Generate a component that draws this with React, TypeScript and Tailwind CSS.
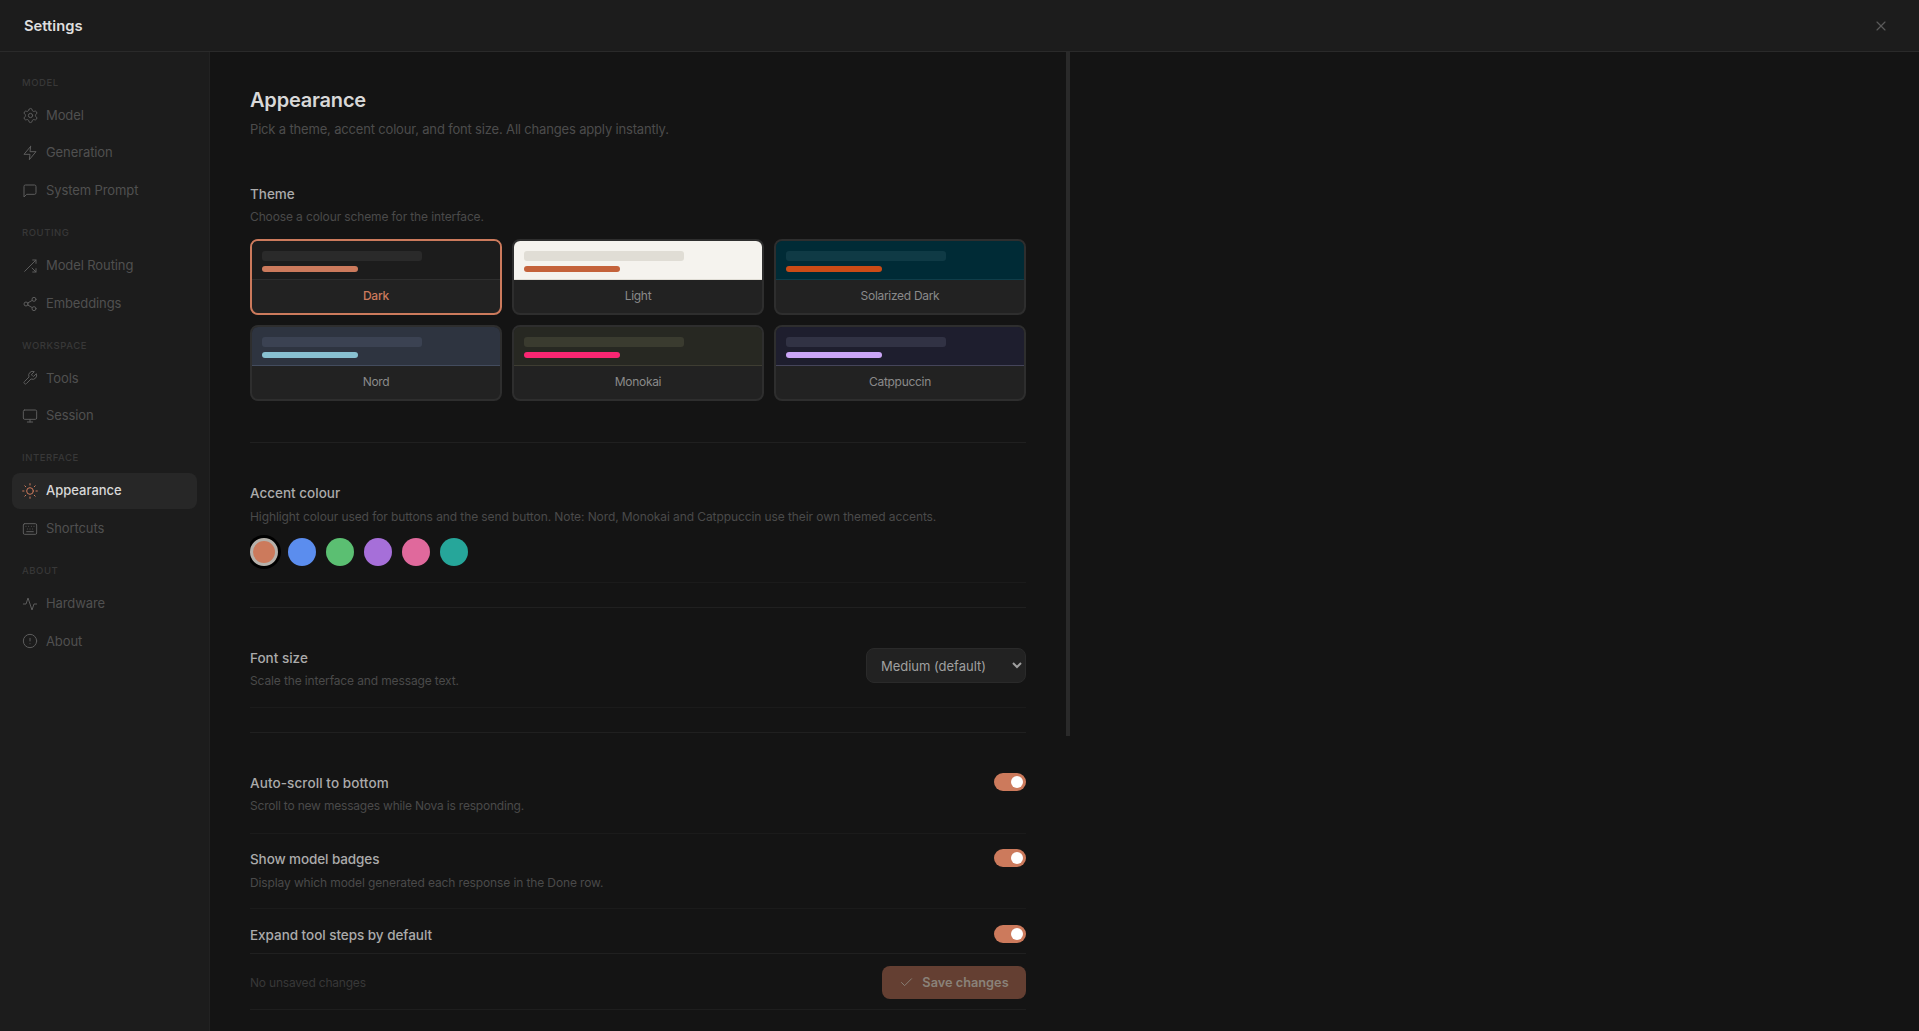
import { Settings, Keyboard, X, Check } from "lucide-react";
import type { ReactNode } from "react";

function Svg({ className, children }: { className?: string; children: ReactNode }) {
  return (
    <svg width="16" height="16" viewBox="0 0 24 24" fill="none" stroke="currentColor" strokeWidth="1.5" strokeLinecap="round" strokeLinejoin="round" className={className}>
      {children}
    </svg>
  );
}

const Gear = ({ className }: { className?: string }) => <Settings size={17} strokeWidth={1.4} className={`-mx-[0.5px] ${className}`} />;
const Keys = ({ className }: { className?: string }) => <Keyboard size={16} strokeWidth={1.5} className={className} />;
const Bolt = ({ className }: { className?: string }) => (
  <Svg className={className}><polygon points="13 2 3 14 12 14 11 22 21 10 12 10 13 2" /></Svg>
);
const Chat = ({ className }: { className?: string }) => (
  <Svg className={className}><path d="M21 15a2 2 0 0 1-2 2H7l-4 4V5a2 2 0 0 1 2-2h14a2 2 0 0 1 2 2z" /></Svg>
);
const RouteIcon = ({ className }: { className?: string }) => (
  <Svg className={className}>
    <polyline points="16 3 21 3 21 8" />
    <line x1="4" y1="20" x2="21" y2="3" />
    <polyline points="21 16 21 21 16 21" />
    <line x1="15" y1="15" x2="21" y2="21" />
  </Svg>
);
const ShareIcon = ({ className }: { className?: string }) => (
  <Svg className={className}>
    <circle cx="18" cy="5" r="3" />
    <circle cx="6" cy="12" r="3" />
    <circle cx="18" cy="19" r="3" />
    <line x1="8.59" y1="13.51" x2="15.42" y2="17.49" />
    <line x1="15.41" y1="6.51" x2="8.59" y2="10.49" />
  </Svg>
);
const WrenchIcon = ({ className }: { className?: string }) => (
  <Svg className={className}>
    <path d="M14.7 6.3a1 1 0 0 0 0 1.4l1.6 1.6a1 1 0 0 0 1.4 0l3.77-3.77a6 6 0 0 1-7.94 7.94l-6.91 6.91a2.12 2.12 0 0 1-3-3l6.91-6.91a6 6 0 0 1 7.94-7.94l-3.76 3.76z" />
  </Svg>
);
const MonitorIcon = ({ className }: { className?: string }) => (
  <Svg className={className}>
    <rect x="2" y="3" width="20" height="14" rx="2" ry="2" />
    <line x1="8" y1="21" x2="16" y2="21" />
    <line x1="12" y1="17" x2="12" y2="21" />
  </Svg>
);
const SunIcon = ({ className }: { className?: string }) => (
  <Svg className={className}>
    <circle cx="12" cy="12" r="5" />
    <line x1="12" y1="1" x2="12" y2="3" />
    <line x1="12" y1="21" x2="12" y2="23" />
    <line x1="4.22" y1="4.22" x2="5.64" y2="5.64" />
    <line x1="18.36" y1="18.36" x2="19.78" y2="19.78" />
    <line x1="1" y1="12" x2="3" y2="12" />
    <line x1="21" y1="12" x2="23" y2="12" />
    <line x1="4.22" y1="19.78" x2="5.64" y2="18.36" />
    <line x1="18.36" y1="5.64" x2="19.78" y2="4.22" />
  </Svg>
);
const PulseIcon = ({ className }: { className?: string }) => (
  <Svg className={className}><polyline points="22 12 18 12 15 21 9 3 6 12 2 12" /></Svg>
);
const AlertIcon = ({ className }: { className?: string }) => (
  <Svg className={className}>
    <circle cx="12" cy="12" r="10" />
    <line x1="12" y1="8" x2="12" y2="12" />
    <line x1="12" y1="16" x2="12.01" y2="16" />
  </Svg>
);

const nav = [
  { label: "Model", items: [
    { name: "Model", Icon: Gear },
    { name: "Generation", Icon: Bolt },
    { name: "System Prompt", Icon: Chat },
  ]},
  { label: "Routing", items: [
    { name: "Model Routing", Icon: RouteIcon },
    { name: "Embeddings", Icon: ShareIcon },
  ]},
  { label: "Workspace", items: [
    { name: "Tools", Icon: WrenchIcon },
    { name: "Session", Icon: MonitorIcon },
  ]},
  { label: "Interface", items: [
    { name: "Appearance", Icon: SunIcon, active: true },
    { name: "Shortcuts", Icon: Keys },
  ]},
  { label: "About", items: [
    { name: "Hardware", Icon: PulseIcon },
    { name: "About", Icon: AlertIcon },
  ]},
];

const themes = [
  { name: "Dark", preview: "bg-[#1c1c1c] border-[#2e2e2e]", bar: "bg-[#2a2a2a]", accent: "bg-[#cc7a5c]", active: true },
  { name: "Light", preview: "bg-[#f5f3ee] border-[#e0ddd5]", bar: "bg-[#e0ddd5]", accent: "bg-[#c4623a]" },
  { name: "Solarized Dark", preview: "bg-[#002b36] border-[#0f3d49]", bar: "bg-[#0f3a45]", accent: "bg-[#cb4b16]" },
  { name: "Nord", preview: "bg-[#2e3440] border-[#434c5e]", bar: "bg-[#3b4252]", accent: "bg-[#88c0d0]" },
  { name: "Monokai", preview: "bg-[#272822] border-[#3e3d32]", bar: "bg-[#3a3b2f]", accent: "bg-[#f92672]" },
  { name: "Catppuccin", preview: "bg-[#1e1e2e] border-[#45455a]", bar: "bg-[#313244]", accent: "bg-[#cba6f7]" },
];

const swatches = ["bg-[#5b8dee]", "bg-[#5bbf72]", "bg-[#a66fd9]", "bg-[#e0699c]", "bg-[#26a69a]"];

function Toggle() {
  return (
    <div className="flex h-[18px] w-8 shrink-0 items-center justify-end rounded-full bg-[#cc7a5c] pr-[3px]">
      <div className="h-3 w-3 rounded-full bg-white" />
    </div>
  );
}

export default function App() {
  return (
    <div className="flex h-screen flex-col overflow-hidden bg-[#141414] font-['Inter',sans-serif] text-[#ababab]">
      <header className="flex h-[52px] shrink-0 items-center justify-between border-b border-[#2a2a2a] bg-[#1c1c1c] pl-6 pr-[30px] pt-px">
        <h2 className="text-[14.75px] font-semibold text-[#dedede]">Settings</h2>
        <X size={16} strokeWidth={1.75} className="text-[#5a5a5a]" />
      </header>
      <div className="flex min-h-0 flex-1">
        <aside className="flex w-[210px] shrink-0 flex-col border-r border-[#222222] bg-[#1c1c1c] px-3 pt-[23px]">
          {nav.map((section, i) => (
            <div key={section.label} className={i ? "mt-4" : ""}>
              <div className="mb-[6px] flex h-4 items-center pl-2.5 text-[9.5px] font-medium uppercase tracking-[0.06em] text-[#383838]">
                {section.label}
              </div>
              <div className="flex flex-col gap-px">
                {section.items.map(({ name, Icon, active }: any) => (
                  <div
                    key={name}
                    className={
                      active
                        ? "flex h-[36.8px] items-center gap-2 rounded-lg bg-[#272727] pl-2.5 text-[13px] font-medium text-[#d8d8d8]"
                        : "flex h-[36.8px] items-center gap-2 rounded-lg pl-2.5 text-[13px] tracking-[-0.1px] text-[#505050]"
                    }
                  >
                    <Icon className={active ? "text-[#cc7a5c]" : "text-[#5c5c5c]"} />
                    <span>{name}</span>
                  </div>
                ))}
              </div>
            </div>
          ))}
        </aside>
        <main className="flex w-[860px] shrink-0">
          <div className="flex min-w-0 flex-1 flex-col px-10">
            <div className="min-h-0 flex-1 overflow-hidden pt-[34px]">
              <h1 className="h-7 text-[20px] font-semibold leading-7 tracking-[-0.2px] text-[#d8d8d8]">Appearance</h1>
              <p className="mt-[5px] h-5 text-[13px] leading-5 tracking-[-0.17px] text-[#4c4c4c]">
                Pick a theme, accent colour, and font size. All changes apply instantly.
              </p>

              <div className="mt-[45px] h-5 text-[13.5px] font-medium leading-5">Theme</div>
              <div className="mt-1 h-[18px] text-[12px] leading-[18px] tracking-[-0.12px] text-[#4a4a4a]">Choose a colour scheme for the interface.</div>
              <div className="mt-[13px] grid grid-cols-3 gap-2.5">
                {themes.map((t) => (
                  <div
                    key={t.name}
                    className={
                      t.active
                        ? "h-[76px] overflow-hidden rounded-lg border-2 border-[#cc7a5c] bg-[#222222]"
                        : "h-[76px] overflow-hidden rounded-lg border-2 border-[#2e2e2e] bg-[#222222]"
                    }
                  >
                    <div className={`h-[39px] border-b px-2.5 pt-2.5 ${t.preview}`}>
                      <div className={`h-2.5 w-[70%] rounded-[3px] ${t.bar}`} />
                      <div className={`mt-[5px] h-1.5 w-[42%] rounded-[3px] ${t.accent}`} />
                    </div>
                    <div className={t.active ? "flex h-[31px] items-center justify-center text-[12px] font-medium tracking-[-0.2px] text-[#cc7a5c]" : "flex h-[31px] items-center justify-center text-[12px] tracking-[-0.3px] text-[#8a8a8a]"}>
                      {t.name}
                    </div>
                  </div>
                ))}
              </div>

              <div className="mt-[41px] border-t border-[#202020]" />

              <div className="mt-10 h-5 text-[13.5px] font-medium leading-5">Accent colour</div>
              <div className="mt-[5px] h-[18px] text-[12px] leading-[18px] tracking-[-0.09px] text-[#4a4a4a]">
                Highlight colour used for buttons and the send button. Note: Nord, Monokai and Catppuccin use their own themed accents.
              </div>
              <div className="mt-[12px] flex gap-2.5">
                <div className="h-7 w-7 rounded-full border-[3px] border-[#b5b1ab] bg-[#cc7a5c] shadow-[0_0_0_3px_#000000]" />
                {swatches.map((c) => (
                  <div key={c} className={`h-7 w-7 rounded-full ${c}`} />
                ))}
              </div>

              <div className="mt-4 border-t border-[#1b1b1b]" />
              <div className="mt-6 border-t border-[#202020]" />

              <div className="mt-10 flex items-start justify-between">
                <div>
                  <div className="h-5 text-[13.5px] font-medium leading-5">Font size</div>
                  <div className="mt-1 h-[18px] text-[12px] leading-[18px] tracking-[-0.13px] text-[#4a4a4a]">Scale the interface and message text.</div>
                </div>
                <select className="h-[35px] w-40 rounded-lg border border-[#2a2a2a] bg-[#222222] pl-[10px] text-[13px] tracking-[-0.02px] text-[#a0a0a0] outline-none [color-scheme:dark]" defaultValue="Medium (default)">
                  <option>Small</option>
                  <option>Medium (default)</option>
                  <option>Large</option>
                </select>
              </div>

              <div className="mt-[17px] border-t border-[#1b1b1b]" />
              <div className="mt-6 border-t border-[#202020]" />

              <div className="mt-10 flex items-start justify-between">
                <div>
                  <div className="h-5 text-[13.5px] font-medium leading-5 tracking-[0.1px]">Auto-scroll to bottom</div>
                  <div className="mt-1 h-[18px] text-[12px] leading-[18px] tracking-[-0.2px] text-[#4a4a4a]">Scroll to new messages while Nova is responding.</div>
                </div>
                <Toggle />
              </div>
              <div className="mt-[18px] border-t border-[#1b1b1b]" />
              <div className="mt-[15px] flex items-start justify-between">
                <div>
                  <div className="h-5 text-[13.5px] font-medium leading-5 tracking-[-0.1px]">Show model badges</div>
                  <div className="mt-[5px] h-[18px] text-[12px] leading-[18px] tracking-[-0.12px] text-[#4a4a4a]">Display which model generated each response in the Done row.</div>
                </div>
                <Toggle />
              </div>
              <div className="mt-4 border-t border-[#1b1b1b]" />
              <div className="mt-4 flex items-start justify-between">
                <div className="h-5 text-[13.5px] font-medium leading-5 tracking-[-0.04px]">Expand tool steps by default</div>
                <Toggle />
              </div>
            </div>
            <div className="mb-[21px] flex h-[57px] shrink-0 items-center justify-between border-y border-y-[#202020] border-b-[#1e1e1e] pt-[2px]">
              <span className="text-[12px] tracking-[-0.2px] text-[#383838]">No unsaved changes</span>
              <button className="flex h-[33px] w-36 items-center justify-center gap-2 rounded-lg bg-[#643f32] text-[12.75px] font-semibold text-[#8a8279]">
                <Check size={15} strokeWidth={1.5} />
                Save changes
              </button>
            </div>
          </div>
          <div className="w-1 shrink-0">
            <div className="h-[684px] w-1 bg-[#2a2a2a]" />
          </div>
        </main>
      </div>
    </div>
  );
}
